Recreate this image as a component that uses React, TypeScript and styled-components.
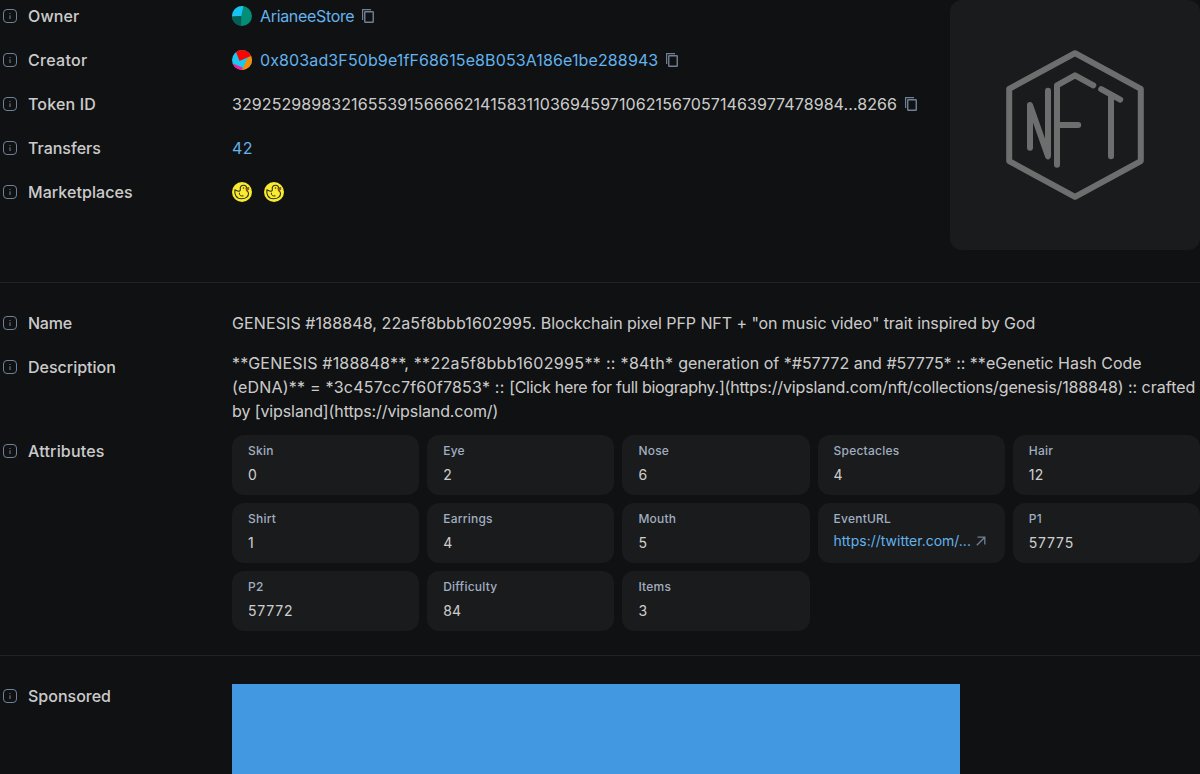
import React from "react";
import styled, { createGlobalStyle } from "styled-components";

const Global = createGlobalStyle`
  * { box-sizing: border-box; }
  html, body { margin: 0; background: #101112; overflow: hidden; }
  body {
    font-family: Inter, sans-serif;
    font-size: 16px;
    line-height: 24px;
    font-feature-settings: "calt" 0;
    color: rgba(255, 255, 255, 0.8);
  }
`;

const Page = styled.main`
  width: 1200px;
  height: 774px;
  overflow: hidden;
  background: #101112;
`;
const Top = styled.section`
  display: flex;
  justify-content: space-between;
  align-items: flex-start;
`;
const Rows = styled.div`
  display: flex;
  flex-direction: column;
  gap: 12px;
  width: 926px;
`;
const Row = styled.div<{ $h?: number }>`
  display: grid;
  grid-template-columns: 232px minmax(0, 1fr);
  height: ${(p) => (p.$h ? `${p.$h}px` : "auto")};
`;
const Label = styled.div<{ $pt?: number; $track?: number }>`
  display: flex;
  gap: 8px;
  align-items: center;
  height: ${(p) => 24 + (p.$pt ?? 4) + 4}px;
  padding: ${(p) => p.$pt ?? 4}px 0 4px;
  font-weight: 500;
  letter-spacing: ${(p) => p.$track ?? 0}px;
`;
const Value = styled.div`
  display: flex;
  align-items: center;
  height: 32px;
  white-space: pre;
`;
const Text = styled.span<{ $track?: number; $w?: number }>`
  width: ${(p) => (p.$w ? `${p.$w}px` : "auto")};
  letter-spacing: ${(p) => p.$track ?? 0}px;
`;
const Link = styled(Text)`
  color: #63b3ed;
`;
const Avatar = styled.svg`
  margin-right: 8px;
`;
const CopyButton = styled.span`
  display: flex;
  margin-left: 8px;
`;
const Media = styled.div`
  display: flex;
  align-items: center;
  justify-content: center;
  width: 250px;
  height: 250px;
  border-radius: 12px;
  background: #1a1b1c;
`;
const Divider = styled.hr<{ $mt: number; $mb: number }>`
  height: 1px;
  border: 0;
  margin: ${(p) => p.$mt}px 0 ${(p) => p.$mb}px;
  background: rgba(255, 255, 255, 0.08);
`;
const Description = styled.div`
  white-space: pre;
`;
const Cards = styled.div`
  display: grid;
  grid-template-columns: repeat(5, 1fr);
  gap: 8px;
`;
const Card = styled.div`
  height: 60px;
  padding: 8px 16px;
  border-radius: 12px;
  background: #1a1b1c;
`;
const Trait = styled.div`
  margin-bottom: 4px;
  font-size: 12px;
  line-height: 16px;
  font-weight: 500;
  letter-spacing: 0.22px;
  color: #a0aec0;
`;
const TraitValue = styled.div<{ $wide: boolean }>`
  font-size: 14px;
  line-height: 24px;
  letter-spacing: ${(p) => (p.$wide ? 0.8 : 0.2)}px;
`;
const TraitLink = styled.a`
  display: flex;
  align-items: center;
  font-size: 14px;
  line-height: 20px;
  color: #63b3ed;
  white-space: nowrap;
`;
const ArrowIcon = styled.svg`
  margin-left: 5px;
`;
const Markets = styled.div`
  display: flex;
  gap: 12px;
`;
const Banner = styled.div`
  width: 728px;
  height: 90px;
  background: #4299e1;
`;

const Hint = () => (
  <svg width="20" height="20" viewBox="0 0 20 20" fill="none">
    <rect x="3.5" y="3.5" width="13" height="13" rx="3.5" stroke="#718096" />
    <path d="M10 7v1M10 9.300v3.700" stroke="#718096" strokeWidth="1.300" opacity="0.8" />
  </svg>
);

const Copy = () => (
  <CopyButton>
    <svg width="12" height="14" viewBox="0 0 12 14" fill="none" stroke="#718096">
      <path d="M.6 11V.6H9" strokeWidth="1.2" />
      <rect x="2.75" y="2.75" width="8.5" height="10.5" rx=".5" strokeWidth="1.4" />
    </svg>
  </CopyButton>
);

const OwnerAvatar = () => (
  <Avatar width="20" height="20" viewBox="0 0 20 20">
    <clipPath id="owner"><circle cx="10" cy="10" r="10" /></clipPath>
    <g clipPath="url(#owner)">
      <path fill="#028e77" d="M0 0h20v20H0z" />
      <path fill="#18c2f2" d="M0 0h11.5L9.3 10 0 10.7z" />
      <path fill="#035e56" d="M0 10.5 9.3 10 9 20H0z" />
    </g>
  </Avatar>
);

const CreatorAvatar = () => (
  <Avatar width="20" height="20" viewBox="0 0 20 20">
    <clipPath id="creator"><circle cx="10" cy="10" r="10" /></clipPath>
    <g clipPath="url(#creator)">
      <path fill="#18c9f2" d="M0 0h20v20H0z" />
      <path fill="#ff1a9a" d="M0 13 12.5 18.5 11 20H0z" />
      <path fill="#f98c01" d="M20 4 15.5 8.5 10 20h10z" />
      <path fill="#fb0503" d="M4 0h16v5.5L7.5 11 4 2z" />
    </g>
  </Avatar>
);

const Duck = () => (
  <svg width="20" height="20" viewBox="0 0 20 20" fill="none">
    <circle cx="10" cy="10" r="10" fill="#f8ec30" />
    <path
      d="M14.600 7.400c.5-2.500-1-4.200-3-4.200-2.300 0-3.800 1.700-3.300 3.800.2 1.200-.2 2.100-1.400 2.200-1.500.1-2.500-.7-4-1.400-.5 4 .7 8.900 6.500 8.900 4.700 0 7.400-2.500 7.100-5.500-.1-1.400-1-2.100-2-2.800"
      stroke="#302c18" strokeWidth="1.1" strokeLinejoin="round"
    />
    <path d="M7.300 10.700c0 2.800 1.300 3.700 4.200 3.100" stroke="#302c18" strokeWidth="1" />
    <circle cx="11.500" cy="6" r=".8" fill="#302c18" />
    <path d="m13.800 6.100 3.100-.7-.2 2.300-2.400 1.100z" fill="#b65031" stroke="#493020" strokeWidth=".5" />
  </svg>
);

const NftMark = () => (
  <svg width="150" height="150" viewBox="0 0 150 150" fill="none" stroke="#6d6e6e" strokeWidth="6" strokeLinejoin="round" strokeLinecap="round">
    <path d="M75 3.200 140.800 38.900v72.200L75 146.800 9.200 111.100V38.900Z" />
    <path d="M30 97.700V55l18 51.300V40.700" />
    <path d="M57 114.700V35.300l18-10 18.300 10M57 75h21.200" />
    <path d="m101.200 39.200 19 10.400M111 45v61.300" />
  </svg>
);

const traits: [string, string][] = [
  ["Skin", "0"], ["Eye", "2"], ["Nose", "6"], ["Spectacles", "4"], ["Hair", "12"],
  ["Shirt", "1"], ["Earrings", "4"], ["Mouth", "5"], ["EventURL", "https://twitter.com/..."], ["P1", "57775"],
  ["P2", "57772"], ["Difficulty", "84"], ["Items", "3"],
];

export default function App() {
  return (
    <Page>
      <Global />
      <Top>
        <Rows>
          <Row>
            <Label $track={0.12}><Hint />Owner</Label>
            <Value><OwnerAvatar /><Link $w={94} $track={-0.33}>ArianeeStore</Link><Copy /></Value>
          </Row>
          <Row>
            <Label $track={0.28}><Hint />Creator</Label>
            <Value><CreatorAvatar /><Link $w={398} $track={0.12}>0x803ad3F50b9e1fF68615e8B053A186e1be288943</Link><Copy /></Value>
          </Row>
          <Row>
            <Label $track={0.15}><Hint />Token ID</Label>
            <Value><Text $w={665} $track={0.083}>32925298983216553915666621415831103694597106215670571463977478984...8266</Text><Copy /></Value>
          </Row>
          <Row>
            <Label><Hint />Transfers</Label>
            <Value><Link $track={0.4}>42</Link></Value>
          </Row>
          <Row>
            <Label $track={0.08}><Hint />Marketplaces</Label>
            <Value><Markets><Duck /><Duck /></Markets></Value>
          </Row>
        </Rows>
        <Media><NftMark /></Media>
      </Top>
      <Divider $mt={32} $mb={24} />
      <Row $h={44}>
        <Label $track={-0.25}><Hint />Name</Label>
        <Value>
          <Text $track={0.1}>{"GENESIS #188848, 22a5f8bbb1602995. "}</Text>
          <Text $track={-0.07}>Blockchain pixel PFP NFT + "on music video" trait inspired by God</Text>
        </Value>
      </Row>
      <Row $h={84}>
        <Label><Hint />Description</Label>
        <Description>
          <Text $track={0.19}>{"**GENESIS #188848**, "}</Text>
          <Text $track={0.33}>{"**22a5f8bbb1602995** "}</Text>
          <Text $track={0.3}>{":: *84th* "}</Text>
          <Text>{"generation of *#57772 and #57775* :: **eGenetic Hash Code\n"}</Text>
          <Text $track={0.22}>{"(eDNA)** = *3c457cc7f60f7853* :: "}</Text>
          <Text $track={-0.31}>[Click here for full biography.]</Text>
          <Text $track={-0.13}>{"(https://vipsland.com/nft/collections/genesis/188848) "}</Text>
          <Text>{":: crafted\n"}</Text>
          <Text $track={-0.1}>by [vipsland](https://vipsland.com/)</Text>
        </Description>
      </Row>
      <Row>
        <Label $track={0.2}><Hint />Attributes</Label>
        <Cards>
          {traits.map(([name, value]) => (
            <Card key={name}>
              <Trait>{name}</Trait>
              {value.startsWith("http") ? (
                <TraitLink>
                  {value}
                  <ArrowIcon width="10" height="10" viewBox="0 0 10 10" fill="none" stroke="#718096" strokeWidth="1.300">
                    <path d="M1.500 1.200h7.300v7.300M8.800 1.200.8 9.200" />
                  </ArrowIcon>
                </TraitLink>
              ) : (
                <TraitValue $wide={value.length > 2}>{value}</TraitValue>
              )}
            </Card>
          ))}
        </Cards>
      </Row>
      <Divider $mt={24} $mb={28} />
      <Row>
        <Label $pt={0}><Hint />Sponsored</Label>
        <Banner />
      </Row>
    </Page>
  );
}
